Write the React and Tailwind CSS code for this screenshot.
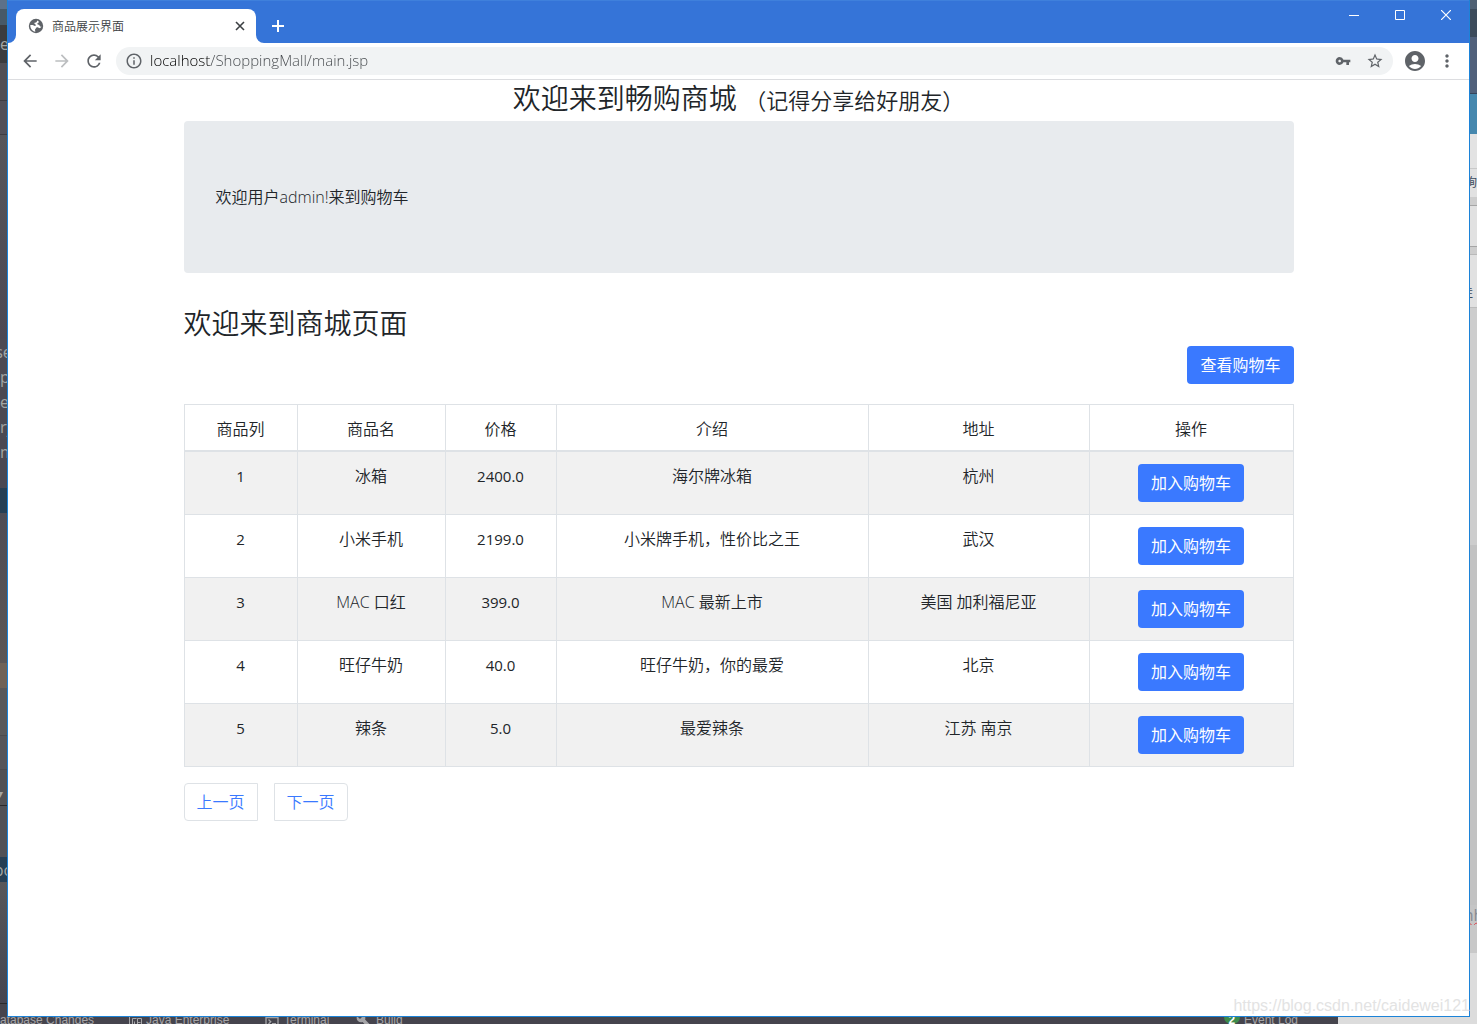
import React from "react";
import {
  MdAccountCircle,
  MdArrowBack,
  MdArrowForward,
  MdBuild,
  MdInfoOutline,
  MdMoreVert,
  MdRefresh,
  MdStarBorder,
  MdTerminal,
  MdVpnKey,
} from "react-icons/md";

const products = [
  { id: 1, name: "冰箱", price: "2400.0", intro: "海尔牌冰箱", address: "杭州" },
  { id: 2, name: "小米手机", price: "2199.0", intro: "小米牌手机，性价比之王", address: "武汉" },
  { id: 3, name: "MAC 口红", price: "399.0", intro: "MAC 最新上市", address: "美国 加利福尼亚" },
  { id: 4, name: "旺仔牛奶", price: "40.0", intro: "旺仔牛奶，你的最爱", address: "北京" },
  { id: 5, name: "辣条", price: "5.0", intro: "最爱辣条", address: "江苏 南京" },
];

const columns = [
  { title: "商品列", width: "w-[113px]" },
  { title: "商品名", width: "w-[148px]" },
  { title: "价格", width: "w-[111px]" },
  { title: "介绍", width: "w-[312px]" },
  { title: "地址", width: "w-[221px]" },
  { title: "操作", width: "w-[204px]" },
];

// slices of the editor window behind the browser, top to bottom
const leftStrip = [
  { style: "h-[9px] bg-[#5d7188]" },
  { style: "h-4 bg-[#475967]" },
  { style: "h-[38px] bg-[#3b3c3e]", text: "e" },
  { style: "h-[38px] bg-[#504f55] border-b border-[#3d3c42]" },
  { style: "h-[34px] bg-[#504f58] border-b border-[#3d3c42]" },
  { style: "h-[204px] bg-linear-to-b from-[#55555a] to-[#4c4853]" },
  { style: "h-[25px] bg-[#4c4a53] justify-center", text: "se" },
  { style: "h-[25px] bg-[#4c4a53]", text: "p" },
  { style: "h-[25px] bg-[#4b4952]", text: "e" },
  { style: "h-[25px] bg-[#4b4952]", text: "ry" },
  { style: "h-[25px] bg-[#4a4852]", text: "m" },
  { style: "h-6 bg-[#4a4852]" },
  { style: "h-[25px] bg-[#263f54]" },
  { style: "h-[150px] bg-linear-to-b from-[#4e4c55] to-[#5b5655]" },
  { style: "h-[25px] bg-[#6f6257]" },
  { style: "h-12 bg-[#58585a] border-b border-[#4b4b4e]" },
  { style: "h-[34px] bg-[#555559] border-b border-[#4b4b4e]" },
  { style: "h-9 bg-[#515154] border-b border-[#29292b] pt-3 pr-1 justify-end text-xs", text: "▾" },
  { style: "h-[51px] bg-[#505156]" },
  { style: "h-[25px] bg-[#263f54] justify-center", text: "po" },
  { style: "h-[122px] bg-linear-to-b from-[#57575a] to-[#444450] border-b border-[#29292b]" },
];

const rightStrip = [
  { style: "h-[9px] bg-[#4f6073]" },
  { style: "h-7 bg-[#3c4b5b]" },
  { style: "h-[57px] bg-[#50607a] border-b border-[#35445a]" },
  { style: "h-10 bg-[#4688ae]" },
  { style: "h-[35px] bg-[#e3e3e3] border-b border-[#c9c9c9]" },
  { style: "h-7 bg-[#e1e1e1] justify-end", text: "询" },
  { style: "h-[9px] bg-[#cdcdcd] border-b border-[#a5a5a5]" },
  { style: "h-[41px] bg-[#e1e1e1] border-b border-[#a5a5a5]" },
  { style: "h-2 bg-[#cdcdcd] border-b border-[#b9b9b9]" },
  { style: "h-[53px] bg-[#e1e1e1] border-b border-[#bcbcbc] justify-end pt-6 pr-1", text: "佳" },
  { style: "h-[237px] bg-[#cdcdcd]" },
  { style: "h-[360px] bg-[#c2c2c2]" },
  {
    style:
      "h-5 bg-[#c5c5c5] justify-center text-base text-[#858b93] underline decoration-[#d9434e] decoration-wavy decoration-1",
    text: "nh",
  },
  { style: "h-7 bg-[#c8c8c8]" },
];

function TabStrip() {
  return (
    <header className="flex h-[43px] items-end border-t border-[#3f80dc] bg-[#3574d8]">
      <div className="relative ml-2 flex h-[34px] w-[240px] items-center rounded-t-lg bg-white pr-[11px] pl-3 text-xs text-[#3c4043]">
        <svg className="absolute bottom-0 -left-2 size-2 text-white" viewBox="0 0 8 8" aria-hidden="true">
          <path d="M8 0v8H0a8 8 0 0 0 8-8z" fill="currentColor" />
        </svg>
        <svg className="absolute -right-2 bottom-0 size-2 text-white" viewBox="0 0 8 8" aria-hidden="true">
          <path d="M0 0v8h8a8 8 0 0 1-8-8z" fill="currentColor" />
        </svg>
        <svg className="size-4" viewBox="0 0 16 16" aria-hidden="true">
          <circle cx="8" cy="8" r="7.2" fill="#5f6368" />
          <path
            d="M9.400 2.600c-.6.500-.3 1.200-1 1.600-.8.500-1.900.2-2 1.100-.1.800.6.900 1.100 1.300.6.400.3 1.300-.4 1.400-1 .1-1.500-.9-2.500-1H2.300C2.100 10.600 4.400 13.300 7.300 13.700c.2-.8-.4-1.300-.3-2 .1-.9 1-.9 1.100-1.700.1-.7.900-1 1.600-.7.800.4 1.300 1 2.200.8.700-.2 1.300-.8 1.600-1.500-.9.200-1.600-.2-1.900-.9-.3-.8-1-.9-1.700-1.100-.9-.3-.7-1.300.1-1.600.7-.2 1-.8.700-1.400z"
            fill="#fff"
          />
        </svg>
        <span className="ml-2 flex-1 pt-0.5 font-[350]">商品展示界面</span>
        <button aria-label="关闭标签页" className="text-[#3c4043]">
          <svg className="size-[10px]" viewBox="0 0 10 10" fill="none" stroke="currentColor" strokeWidth="1.6">
            <path d="M1 1l8 8M9 1l-8 8" />
          </svg>
        </button>
      </div>
      <button aria-label="新标签页" className="mb-[11px] ml-4 text-white">
        <svg className="size-3" viewBox="0 0 12 12" fill="none" stroke="currentColor" strokeWidth="2">
          <path d="M6 0v12M0 6h12" />
        </svg>
      </button>
      <div className="ml-auto flex self-start text-white">
        <button aria-label="最小化" className="flex h-7 w-[46px] items-center justify-center">
          <svg className="size-[10px]" viewBox="0 0 10 10" stroke="currentColor">
            <path d="M0 5.5h10" />
          </svg>
        </button>
        <button aria-label="最大化" className="flex h-7 w-[46px] items-center justify-center">
          <svg className="size-[10px]" viewBox="0 0 10 10" fill="none" stroke="currentColor">
            <path d="M.5.5h9v9h-9z" />
          </svg>
        </button>
        <button aria-label="关闭" className="flex h-7 w-[46px] items-center justify-center">
          <svg className="size-[10px]" viewBox="0 0 10 10" fill="none" stroke="currentColor" strokeWidth="1.2">
            <path d="M0 0l10 10M10 0L0 10" />
          </svg>
        </button>
      </div>
    </header>
  );
}

function Toolbar() {
  return (
    <nav className="flex h-[37px] items-center border-b border-[#dcdde0] bg-white text-[#5f6368]">
      <button aria-label="后退" className="ml-3 w-5">
        <MdArrowBack className="size-5" />
      </button>
      <button aria-label="前进" className="ml-3 w-5 text-[#bcbec0]">
        <MdArrowForward className="size-5" />
      </button>
      <button aria-label="刷新" className="ml-3 w-5">
        <MdRefresh className="size-5" />
      </button>
      <div className="ml-3 flex h-7 flex-1 items-center rounded-full bg-[#f1f3f4] px-[9px]">
        <MdInfoOutline className="size-[18px]" />
        <input
          aria-label="地址"
          readOnly
          value="localhost/ShoppingMall/main.jsp"
          className="ml-[7px] flex-1 bg-[linear-gradient(90deg,#000000_61px,#43474b_61px)] bg-clip-text pb-0.5 text-[15px] leading-5 font-[350] text-transparent outline-none"
        />
        <MdVpnKey className="size-4" />
        <MdStarBorder className="ml-[15px] size-[18px]" />
      </div>
      <button aria-label="用户" className="ml-[10px]">
        <MdAccountCircle className="size-6" />
      </button>
      <button aria-label="菜单" className="mr-3 ml-[10px]">
        <MdMoreVert className="size-5" />
      </button>
    </nav>
  );
}

function PrimaryButton({ children }) {
  return (
    <button className="h-[38px] rounded bg-[#3a79ff] px-[13px] text-base leading-6 font-normal text-white">
      {children}
    </button>
  );
}

function ProductTable() {
  return (
    <table className="mt-5 w-full table-fixed border-collapse border border-[#dee2e6] text-center">
      <thead>
        <tr>
          {columns.map((col) => (
            <th
              key={col.title}
              scope="col"
              className={`${col.width} border border-b-2 border-[#dee2e6] pt-3 pb-[9px] leading-6 font-[350]`}
            >
              {col.title}
            </th>
          ))}
        </tr>
      </thead>
      <tbody>
        {products.map((p) => (
          <tr key={p.id} className="align-top odd:bg-[#f1f1f1]">
            <td className="border border-[#dee2e6] p-3 text-[15px] font-normal">{p.id}</td>
            <td className="border border-[#dee2e6] p-3">{p.name}</td>
            <td className="border border-[#dee2e6] p-3 text-[15px] font-normal">{p.price}</td>
            <td className="border border-[#dee2e6] p-3">{p.intro}</td>
            <td className="border border-[#dee2e6] p-3">{p.address}</td>
            <td className="border border-[#dee2e6] p-3">
              <div className="flex justify-center">
                <PrimaryButton>加入购物车</PrimaryButton>
              </div>
            </td>
          </tr>
        ))}
      </tbody>
    </table>
  );
}

function ShopPage() {
  return (
    <main className="mx-auto w-full max-w-[1110px] text-base leading-6 font-[350] text-[#212529]">
      <h3 className="mb-2 pt-1 text-center text-[28px] leading-[29px]">
        欢迎来到畅购商城 <small className="text-[22px] leading-none">（记得分享给好朋友）</small>
      </h3>
      <section className="mb-8 rounded bg-[#e8ebee] px-8 py-16">欢迎用户admin!来到购物车</section>
      <h3 className="mb-2 pt-1 text-[28px] leading-[29px]">欢迎来到商城页面</h3>
      <div className="flex justify-end">
        <PrimaryButton>查看购物车</PrimaryButton>
      </div>
      <ProductTable />
      <div className="mt-4 flex gap-4 leading-5 text-[#3a79ff]">
        <a href="#prev" className="rounded-l border border-[#dee2e6] px-3 py-2">
          上一页
        </a>
        <a href="#next" className="rounded-r border border-[#dee2e6] px-3 py-2">
          下一页
        </a>
      </div>
    </main>
  );
}

function Strip({ parts, className }) {
  return (
    <div className={`flex w-[7px] shrink-0 flex-col overflow-hidden ${className}`}>
      {parts.map((part, i) => (
        <div key={i} className={`flex shrink-0 items-center whitespace-nowrap ${part.style}`}>
          {part.text}
        </div>
      ))}
    </div>
  );
}

function StatusBar() {
  return (
    <footer className="flex h-[7px] overflow-hidden bg-[#dcdcdc] font-['Liberation_Sans',sans-serif] text-xs leading-[7px] text-[#a5a5a8]">
      <div className="flex w-[1338px] shrink-0 items-center bg-[#45444d] whitespace-nowrap">
        <span className="w-[128px]">atabase Changes</span>
        <span className="flex w-[136px] items-center gap-1">
          <svg className="h-[14px] w-[14px]" viewBox="0 0 14 14" fill="none" stroke="currentColor" aria-hidden="true">
            <path d="M1.500 0v14M4.500 14V4.500h4M6.500 14V7.500M9.500 14V4.500h4V14M9.500 8.500h3" />
          </svg>
          Java Enterprise
        </span>
        <span className="flex w-[92px] items-center gap-1">
          <MdTerminal className="size-4" />
          Terminal
        </span>
        <span className="flex items-center gap-1">
          <MdBuild className="size-4" />
          Build
        </span>
        <span className="mr-10 ml-auto flex items-center gap-1">
          <span className="w-4 rounded-b-full bg-[#3d8b4b] text-center font-bold text-white">2</span>
          Event Log
        </span>
      </div>
    </footer>
  );
}

export default function App() {
  return (
    <div className="relative flex min-h-screen flex-col font-['Open_Sans','Noto_Sans_CJK_SC',sans-serif]">
      <div className="flex flex-1">
        <Strip parts={leftStrip} className="bg-[#45444d] text-base text-[#a3a6a3]" />
        <div className="flex min-w-0 flex-1 flex-col border-x border-b border-[#1c83d8] bg-white">
          <TabStrip />
          <Toolbar />
          <ShopPage />
        </div>
        <Strip parts={rightStrip} className="bg-[#dcdcdc] text-xs text-[#3c4a5c]" />
      </div>
      <StatusBar />
      <div className="pointer-events-none absolute right-[7px] bottom-2 font-['Liberation_Sans',sans-serif] text-base leading-5 text-[#e3e3e3]">
        https://blog.csdn.net/caidewei121
      </div>
    </div>
  );
}
